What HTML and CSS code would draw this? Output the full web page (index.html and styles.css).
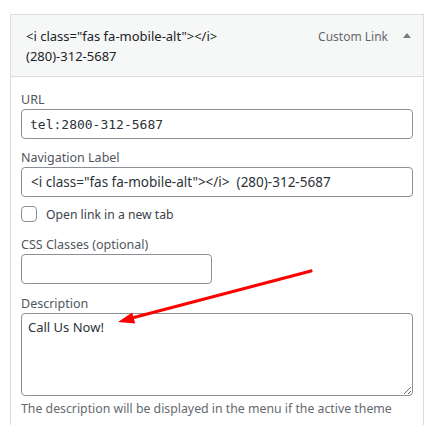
FILE: index.html
```html
<!DOCTYPE html>
<html>
<head>
<meta charset="utf-8">
<link rel="stylesheet" href="styles.css">
</head>
<body>
<div class="panel">
  <div class="panel-head">
    <div class="item-title">&lt;i class="fas fa-mobile-alt"&gt;&lt;/i&gt; (280)-312-5687</div>
    <div class="item-controls">
      <span class="item-type">Custom Link</span>
      <span class="toggle"></span>
    </div>
  </div>
  <div class="panel-body">
    <div class="field">
      <label class="field-label">URL</label>
      <input class="text-input mono" type="text" value="tel:2800-312-5687">
    </div>
    <div class="field">
      <label class="field-label">Navigation Label</label>
      <input class="text-input wide-text" type="text" value="&lt;i class=&quot;fas fa-mobile-alt&quot;&gt;&lt;/i&gt;  (280)-312-5687">
    </div>
    <label class="check-row">
      <span class="checkbox"></span>
      <span class="check-text">Open link in a new tab</span>
    </label>
    <div class="field field-css">
      <label class="field-label">CSS Classes (optional)</label>
      <input class="text-input short" type="text" value="">
    </div>
    <div class="field field-desc">
      <label class="field-label">Description</label>
      <textarea class="textarea">Call Us Now!</textarea>
      <p class="help">The description will be displayed in the menu if the active theme</p>
    </div>
  </div>
</div>
<svg class="annotation" width="439" height="425" viewBox="0 0 439 425">
  <line x1="311" y1="271" x2="130" y2="318.5" stroke="#ff0000" stroke-width="3.2" stroke-linecap="round"/>
  <polygon points="118,322 132.2,312.6 135.2,323.4" fill="#ff0000"/>
</svg>
</body>
</html>
```
FILE: styles.css
```css
html, body {
  margin: 0;
  padding: 0;
  background: #ffffff;
}
body {
  position: relative;
  width: 439px;
  height: 425px;
  overflow: hidden;
  font-family: "Noto Sans", "Open Sans", sans-serif;
  font-size: 12.5px;
  color: #1d2327;
}
.panel {
  margin: 14px 0 0 10px;
  width: 414px;
  box-sizing: border-box;
  border: 1px solid #dcdcde;
  border-bottom: none;
  height: 420px;
}
.panel-head {
  display: flex;
  justify-content: space-between;
  align-items: flex-start;
  background: #f6f7f7;
  border-bottom: 1px solid #dcdcde;
  padding: 11px 12px 10px 15px;
}
.item-title {
  width: 240px;
  line-height: 20px;
  font-size: 13px;
  color: #1d2327;
}
.item-controls {
  display: flex;
  align-items: center;
  gap: 15px;
  height: 20px;
}
.item-type {
  color: #646970;
  font-size: 12px;
}
.toggle {
  width: 0;
  height: 0;
  border-left: 4px solid transparent;
  border-right: 4px solid transparent;
  border-bottom: 5px solid #787c82;
  margin-top: -2px;
}
.panel-body {
  padding: 14px 10px 0 10px;
}
.field {
  display: flex;
  flex-direction: column;
}
.field + .field {
  margin-top: 10px;
}
.field-label {
  line-height: 18px;
  color: #50575e;
  font-size: 12.5px;
}
.text-input {
  box-sizing: border-box;
  height: 30px;
  width: 100%;
  border: 1px solid #8c8f94;
  border-radius: 4px;
  padding: 0 8px;
  font-family: "Noto Sans", sans-serif;
  font-size: 13px;
  color: #2c3338;
  background: #fff;
  margin: 0;
}
.text-input.wide-text {
  padding-left: 9px;
  font-size: 13.5px;
  white-space: pre;
}
.text-input.mono {
  font-family: "DejaVu Sans Mono", "Liberation Mono", monospace;
  font-size: 13px;
}
.text-input.short {
  width: 191px;
}
.check-row {
  display: flex;
  align-items: center;
  gap: 9px;
  margin-top: 9px;
  height: 16px;
}
.checkbox {
  width: 16px;
  height: 16px;
  box-sizing: border-box;
  border: 1px solid #8c8f94;
  border-radius: 4px;
  background: #fff;
}
.check-text {
  color: #3c434a;
  font-size: 12.2px;
}
.field-css {
  margin-top: 14px;
}
.field + .field-desc {
  margin-top: 11px;
}
.textarea {
  box-sizing: border-box;
  width: 100%;
  height: 83px;
  border: 1px solid #8c8f94;
  border-radius: 4px;
  padding: 4px 6px;
  font-family: "Noto Sans", sans-serif;
  font-size: 13px;
  color: #2c3338;
  margin: 0;
  resize: vertical;
  display: block;
}
.help {
  margin: 4px 0 0 0;
  line-height: 18px;
  color: #646970;
  font-size: 12.3px;
}
.annotation {
  position: absolute;
  left: 0;
  top: 0;
  pointer-events: none;
}
```
